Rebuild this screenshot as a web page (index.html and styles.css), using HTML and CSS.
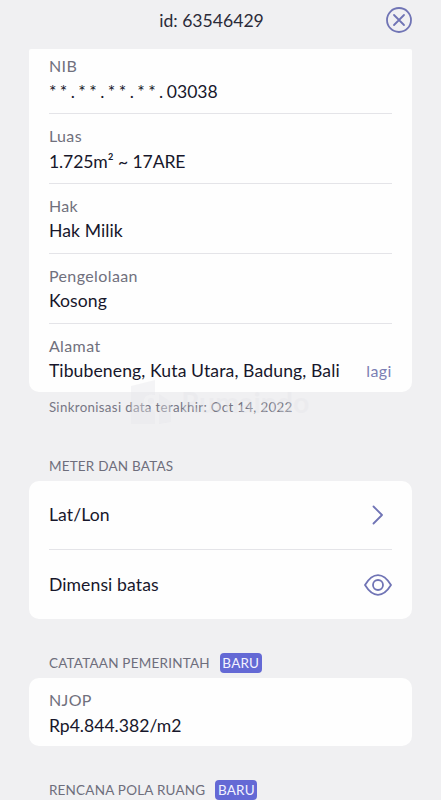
FILE: index.html
```html
<!DOCTYPE html>
<html lang="id">
<head>
<meta charset="utf-8">
<title>id: 63546429</title>
<link rel="stylesheet" href="styles.css">
</head>
<body>
<header class="topbar">
  <h1 class="title">id: 63546429</h1>
  <svg class="close" viewBox="0 0 26 26"><circle cx="13" cy="13" r="12"/><path d="M8 8l10 10M18 8L8 18"/></svg>
</header>
<main>
  <section class="card details">
    <div class="field"><span class="label">NIB</span><span class="value number"><span class="mask">**.**.**.**.</span>03038</span></div>
    <div class="field"><span class="label">Luas</span><span class="value number area">1.725m² ~ 17ARE</span></div>
    <div class="field"><span class="label">Hak</span><span class="value">Hak Milik</span></div>
    <div class="field"><span class="label">Pengelolaan</span><span class="value">Kosong</span></div>
    <div class="field"><span class="label">Alamat</span><div class="row"><span class="value">Tibubeneng, Kuta Utara, Badung, Bali</span><a class="more">lagi</a></div></div>
    <div class="watermark">
      <svg viewBox="0 0 40 44"><path d="M0 6L24 0V15C15 12 9 21 15 27L24 31V44H0ZM28 14L40 22V42L28 44Z"/><circle cx="20" cy="21" r="3"/></svg>
      <span>Rumaindo</span>
    </div>
  </section>
  <p class="sync">Sinkronisasi data terakhir: Oct 14, 2022</p>

  <h2 class="heading">METER DAN BATAS</h2>
  <section class="card actions">
    <div class="action"><span class="value">Lat/Lon</span><svg class="chevron" viewBox="0 0 12 20"><path d="M1.5 1.5L10 10L1.5 18.500"/></svg></div>
    <div class="action"><span class="value">Dimensi batas</span><svg class="eye" viewBox="0 0 28 22"><path d="M1 11C5 4.500 9 1.200 14 1.200S23 4.500 27 11C23 17.500 19 20.800 14 20.800S5 17.500 1 11Z"/><circle cx="14" cy="11" r="5"/></svg></div>
  </section>

  <h2 class="heading">CATATAAN PEMERINTAH <span class="badge">BARU</span></h2>
  <section class="card tax">
    <div class="field"><span class="label">NJOP</span><span class="value number">Rp4.844.382/m2</span></div>
  </section>

  <h2 class="heading">RENCANA POLA RUANG <span class="badge">BARU</span></h2>
</main>
</body>
</html>
```
FILE: styles.css
```css
* { box-sizing: border-box; }
html, body { height: 100%; overflow: hidden; }
body {
  margin: 0;
  background: #f0f0f2;
  color: #17172b;
  font-family: Lato, "Liberation Sans", sans-serif;
}
.topbar {
  display: grid;
  grid-template-columns: 1fr auto 1fr;
  align-items: center;
  height: 49px;
  padding: 0 29px 9px 11px;
}
.title {
  grid-column: 2;
  margin: 0;
  font-size: 17.6px;
  font-weight: 400;
  color: #2b2b39;
}
.close { width: 26px; height: 26px; justify-self: end; }
svg { fill: none; stroke: #7074b5; stroke-width: 1.8; stroke-linecap: round; stroke-linejoin: round; }
main { padding: 0 29.3px; }
.card { background: #fefefe; border-radius: 10px; padding: 0 20px 0 19.6px; }
.details { position: relative; height: 343px; border-radius: 2px 2px 10px 10px; }
.field {
  display: flex;
  flex-direction: column;
  height: 70px;
  padding-top: 10px;
  border-bottom: 1px solid #e4e4e8;
}
.field:first-child { height: 65px; padding-top: 5px; }
.field:nth-child(5), .action:last-child, .tax .field { border-bottom: 0; }
.label { font-size: 16px; line-height: 24px; letter-spacing: 0.4px; color: #70707d; }
.value { font-size: 17.6px; line-height: 26px; letter-spacing: 0.1px; white-space: nowrap; }
.number { letter-spacing: 0; line-height: 27px; }
.area { letter-spacing: -0.1px; }
.mask { letter-spacing: 3.45px; }
.row { display: flex; justify-content: space-between; }
.more { font-size: 16px; line-height: 25px; letter-spacing: 0.4px; color: #7b7fb4; }
.watermark {
  position: absolute;
  left: 102px;
  top: 331px;
  display: flex;
  align-items: center;
  gap: 10px;
  font-size: 28.5px;
  font-weight: 700;
  line-height: 44px;
  color: rgba(228, 228, 232, 0.36);
}
.watermark svg { width: 40px; height: 44px; fill: rgba(230, 230, 234, 0.38); stroke: none; }
.sync {
  margin: 0;
  height: 64px;
  padding: 5px 19.6px 0;
  font-size: 13.3px;
  line-height: 20px;
  letter-spacing: 0.33px;
  color: #777785;
}
.heading {
  display: flex;
  align-items: center;
  gap: 10px;
  margin: 0;
  height: 20px;
  padding: 0 19.6px;
  font-size: 13.5px;
  font-weight: 400;
  line-height: 20px;
  letter-spacing: 0.22px;
  color: #6e6e7c;
}
.actions { margin: 5px 0 34px; height: 138px; }
.action {
  display: flex;
  align-items: center;
  justify-content: space-between;
  height: 69px;
  border-bottom: 1px solid #e4e4e8;
}
.chevron { width: 12px; height: 20px; margin-right: 8px; }
.eye { width: 28px; height: 22px; }
.badge {
  height: 20px;
  padding: 0 2.5px;
  border-radius: 4px;
  background: #6469d5;
  color: #f3f3ff;
}
.tax { margin: 5px 0 34px; height: 68px; }
.tax .field:first-child { height: 68px; padding-top: 10px; }
```
